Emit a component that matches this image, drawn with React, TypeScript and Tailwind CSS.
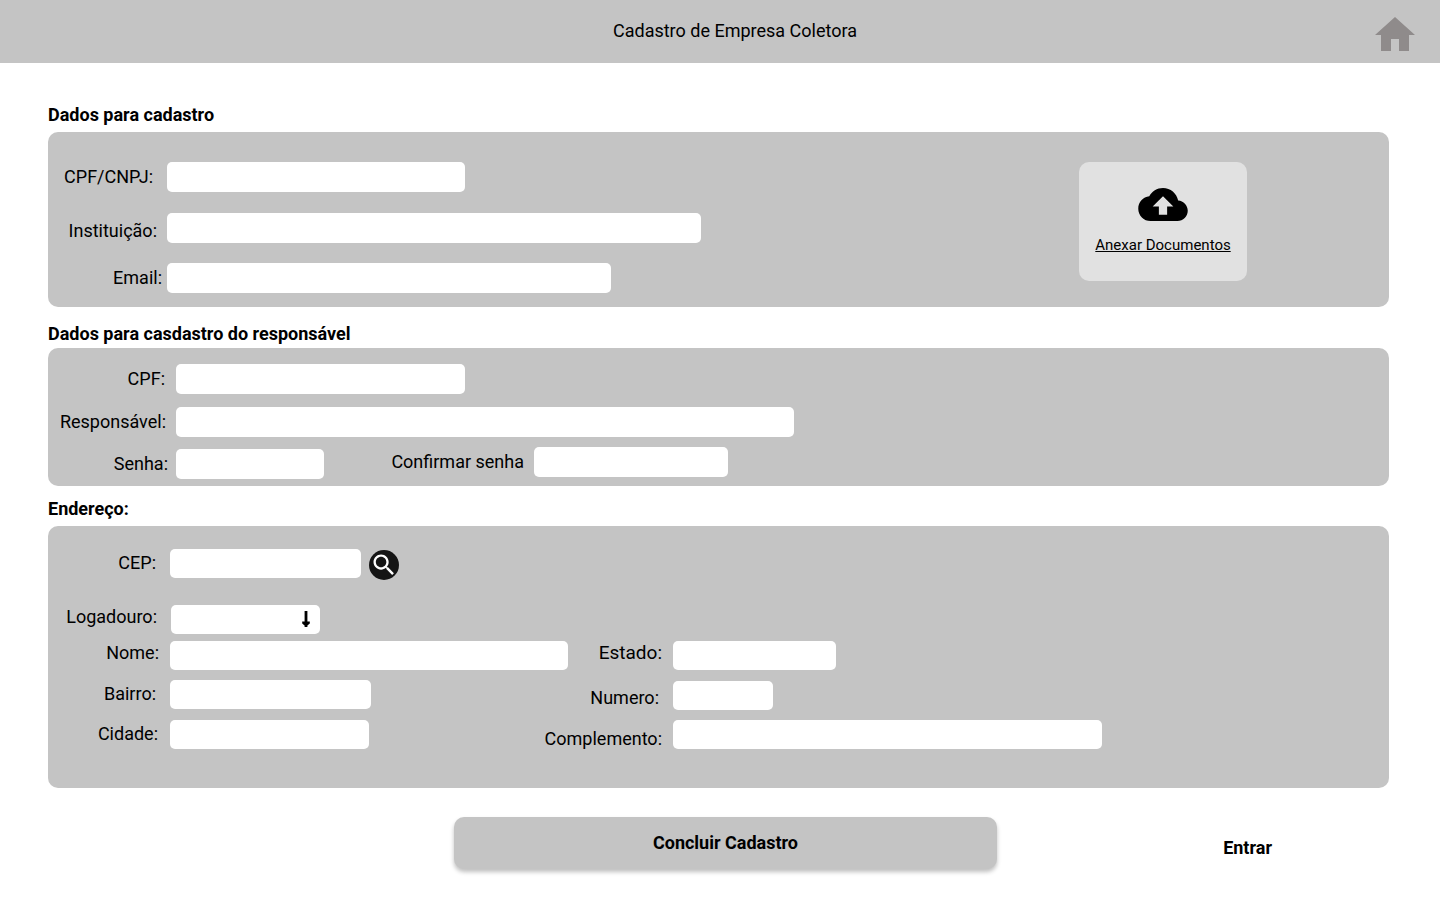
import type { InputHTMLAttributes, LabelHTMLAttributes, ReactNode } from "react";
import clsx from "clsx";

function Label({ className, ...rest }: LabelHTMLAttributes<HTMLLabelElement>) {
  return <label className={clsx("shrink-0 text-right whitespace-nowrap", className)} {...rest} />;
}

function TextBox({ className, ...rest }: InputHTMLAttributes<HTMLInputElement>) {
  return <input className={clsx("min-w-0 rounded-[5px] bg-white px-2", className)} {...rest} />;
}

function Section({ title, titleClass, className, children }: {
  title: string;
  titleClass: string;
  className: string;
  children: ReactNode;
}) {
  return (
    <section>
      <h2 className={clsx("font-bold", titleClass)}>{title}</h2>
      <div className={clsx("rounded-[10px] bg-[#c4c4c4]", className)}>{children}</div>
    </section>
  );
}

function HomeIcon() {
  return (
    <svg viewBox="2 3 20 17" className="h-[34px] w-10 fill-[#8f8b8b]" aria-hidden="true">
      <path d="M10 20v-6h4v6h5v-8h3L12 3 2 12h3v8z" />
    </svg>
  );
}

function CloudUploadIcon() {
  return (
    <svg viewBox="0 4 24 16" className="h-[33px] w-[50px]" aria-hidden="true">
      <path d="M19.35 10.04C18.67 6.59 15.64 4 12 4 9.11 4 6.6 5.64 5.35 8.04 2.34 8.36 0 10.91 0 14c0 3.31 2.69 6 6 6h13c2.76 0 5-2.24 5-5 0-2.64-2.05-4.78-4.65-4.96zM14 13v4h-4v-4H7l5-5 5 5h-3z" />
    </svg>
  );
}

function SearchIcon() {
  return (
    <svg viewBox="0 0 24 24" className="size-7 fill-white" aria-hidden="true">
      <path d="M15.5 14h-.79l-.28-.27C15.41 12.59 16 11.11 16 9.5 16 5.91 13.09 3 9.5 3S3 5.91 3 9.5 5.91 16 9.5 16c1.61 0 3.09-.59 4.23-1.57l.27.28v.79l5 4.99L20.49 19l-4.99-5zm-6 0C7.01 14 5 11.99 5 9.5S7.01 5 9.5 5 14 7.01 14 9.5 11.99 14 9.5 14z" />
    </svg>
  );
}

export default function App() {
  return (
    <div className="min-h-screen bg-white font-[Roboto,sans-serif] text-[18px] leading-6 text-black">
      <header className="grid h-[63px] grid-cols-[1fr_auto_1fr] items-center bg-[#c4c4c4] pr-[25px] pb-0.5 pl-[55px]">
        <h1 className="col-start-2">Cadastro de Empresa Coletora</h1>
        <a href="#inicio" aria-label="Início" className="mb-2.5 self-end justify-self-end">
          <HomeIcon />
        </a>
      </header>

      <form className="pt-10 pr-[51px] pb-8 pl-12" onSubmit={(e) => e.preventDefault()}>
        <Section
          title="Dados para cadastro"
          titleClass="mb-[5px]"
          className="flex items-start justify-between pt-[30px] pr-[142px] pb-3.5"
        >
          <div>
            <div className="flex items-center">
              <Label htmlFor="documento" className="w-[119px] pr-3.5">CPF/CNPJ:</Label>
              <TextBox id="documento" className="h-[30px] w-[298px]" />
            </div>
            <div className="mt-[21px] flex items-end">
              <Label htmlFor="instituicao" className="w-[119px] pr-2.5">Instituição:</Label>
              <TextBox id="instituicao" className="h-[30px] w-[534px]" />
            </div>
            <div className="mt-5 flex items-center">
              <Label htmlFor="email" className="w-[119px] pr-[5px]">Email:</Label>
              <TextBox id="email" type="email" className="h-[30px] w-[444px]" />
            </div>
          </div>
          <button
            type="button"
            className="flex h-[119px] w-[168px] shrink-0 flex-col items-center rounded-[10px] bg-[#e1e1e1] pt-[26px]"
          >
            <CloudUploadIcon />
            <span className="mt-3 text-[15px] underline">Anexar Documentos</span>
          </button>
        </Section>

        <Section
          title="Dados para casdastro do responsável"
          titleClass="mt-[15px] mb-0.5"
          className="pt-4 pb-[7px]"
        >
          <div className="flex items-center">
            <Label htmlFor="cpf" className="w-32 pr-[11px]">CPF:</Label>
            <TextBox id="cpf" className="h-[30px] w-[289px]" />
          </div>
          <div className="mt-[13px] flex items-center">
            <Label htmlFor="responsavel" className="w-32 pr-2.5">Responsável:</Label>
            <TextBox id="responsavel" className="h-[30px] w-[618px]" />
          </div>
          <div className="mt-2.5 flex h-8">
            <div className="flex items-center self-end">
              <Label htmlFor="senha" className="w-32 pr-2">Senha:</Label>
              <TextBox id="senha" type="password" className="h-[30px] w-[148px]" />
            </div>
            <div className="flex items-center self-start">
              <Label htmlFor="confirmar" className="w-[210px] pr-2.5">Confirmar senha</Label>
              <TextBox id="confirmar" type="password" className="h-[30px] w-[194px]" />
            </div>
          </div>
        </Section>

        <Section title="Endereço:" titleClass="mt-[11px] mb-[5px]" className="pt-[23px] pb-[37px]">
          <div className="flex items-start">
            <Label htmlFor="cep" className="w-[122px] pt-0.5 pr-3.5">CEP:</Label>
            <TextBox id="cep" className="h-[29px] w-[191px]" />
            <button
              type="button"
              aria-label="Buscar CEP"
              className="ml-2 mt-px flex size-[30px] items-center justify-center rounded-full bg-[#151515]"
            >
              <SearchIcon />
            </button>
          </div>
          <div className="mt-[25px] flex items-start">
            <Label htmlFor="logradouro" className="w-[123px] pr-3.5">Logadouro:</Label>
            <div className="relative">
              <select id="logradouro" className="block h-[29px] w-[149px] appearance-none rounded-[5px] bg-white px-2" />
              <svg viewBox="0 0 8 16" className="pointer-events-none absolute top-1.5 right-2.5 h-4 w-2" aria-hidden="true">
                <path d="M2.6 0h2.8v10.4L7.8 10.6v1.8L5.4 14.4V16H2.6V14.4L.2 12.4V10.6l2.4-.2z" />
              </svg>
            </div>
          </div>

          <div className="mt-[7px] flex flex-col gap-2.5">
            <div className="flex items-start">
              <div className="flex w-[625px] items-start">
                <Label htmlFor="nome" className="w-[122px] pr-[11px]">Nome:</Label>
                <TextBox id="nome" className="h-[29px] w-[398px]" />
                <Label htmlFor="estado" className="ml-auto pr-[11px] text-[19px]">Estado:</Label>
              </div>
              <TextBox id="estado" className="h-[29px] w-[163px]" />
            </div>
            <div className="flex h-[30px] items-end">
              <div className="flex w-[625px] items-start self-stretch">
                <Label htmlFor="bairro" className="w-[122px] pt-0.5 pr-3.5">Bairro:</Label>
                <TextBox id="bairro" className="h-[29px] w-[201px]" />
                <Label htmlFor="numero" className="ml-auto self-end pr-3.5">Numero:</Label>
              </div>
              <TextBox id="numero" className="h-[29px] w-[100px]" />
            </div>
            <div className="flex h-[31px] items-start">
              <div className="flex w-[625px] items-start self-stretch">
                <Label htmlFor="cidade" className="w-[122px] pt-0.5 pr-3">Cidade:</Label>
                <TextBox id="cidade" className="h-[29px] w-[199px]" />
                <Label htmlFor="complemento" className="ml-auto self-end pr-[11px]">Complemento:</Label>
              </div>
              <TextBox id="complemento" className="h-[29px] w-[429px]" />
            </div>
          </div>
        </Section>

        <footer className="mt-[29px] grid grid-cols-[1fr_auto_1fr] items-center pl-3.5">
          <button
            type="submit"
            className="col-start-2 h-[52px] w-[543px] rounded-[10px] bg-[#c4c4c4] font-bold shadow-[0_3px_4px_rgba(0,0,0,0.25)]"
          >
            Concluir Cadastro
          </button>
          <a href="#entrar" className="mt-2.5 mr-[117px] justify-self-end font-bold">Entrar</a>
        </footer>
      </form>
    </div>
  );
}
